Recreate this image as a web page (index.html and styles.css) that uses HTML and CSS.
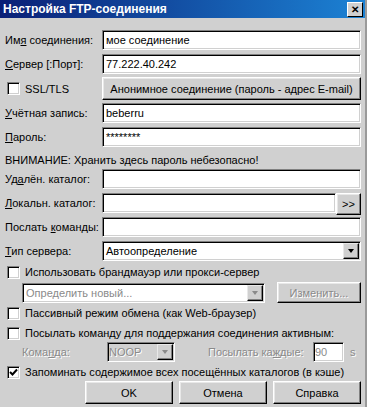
FILE: index.html
```html
<!DOCTYPE html>
<html lang="ru">
<head>
  <meta charset="UTF-8">
  <title>Настройка FTP-соединения</title>
  <link rel="stylesheet" href="styles.css">
</head>
<body>
  <div class="dialog">
    <div class="titlebar">
      <span class="title">Настройка FTP-соединения</span>
      <span class="close">✕</span>
    </div>

    <div class="content">
      <div class="field">
        <label>Им<u>я</u> соединения:</label>
        <div class="edit">мое соединение</div>
      </div>
      <div class="field gap-4">
        <label><u>С</u>ервер [:Порт]:</label>
        <div class="edit">77.222.40.242</div>
      </div>
      <div class="field tall gap-3">
        <div class="check-line"><span class="box"></span>SSL/TLS</div>
        <div class="button">Анонимное соединение (пароль - адрес E-mail)</div>
      </div>
      <div class="field gap-3">
        <label><u>У</u>чётная запись:</label>
        <div class="edit">beberru</div>
      </div>
      <div class="field gap-4">
        <label><u>П</u>ароль:</label>
        <div class="edit">********</div>
      </div>
      <div class="warning">ВНИМАНИЕ: Хранить здесь пароль небезопасно!</div>
      <div class="field">
        <label>Уд<u>а</u>лён. каталог:</label>
        <div class="edit"></div>
      </div>
      <div class="field gap-4">
        <label><u>Л</u>окальн. каталог:</label>
        <div class="browse">
          <div class="edit"></div>
          <div class="button small">&gt;&gt;</div>
        </div>
      </div>
      <div class="field gap-4">
        <label>Послать <u>к</u>оманды:</label>
        <div class="edit"></div>
      </div>
      <div class="field gap-4">
        <label><u>Т</u>ип сервера:</label>
        <div class="edit combo">Автоопределение<span class="arrow"></span></div>
      </div>

      <div class="check-line row first"><span class="box"></span>Использовать брандмауэр или прокси-сервер</div>
      <div class="proxy">
        <div class="edit combo off">Определить новый...<span class="arrow"></span></div>
        <div class="button disabled">Изменить...</div>
      </div>
      <div class="check-line row passive"><span class="box"></span>Пассивный режим обмена (как Web-браузер)</div>
      <div class="check-line row"><span class="box"></span>Посылать команду для поддержания соединения активным:</div>
      <div class="keepalive">
        <span class="muted label-cmd">Кома<u>н</u>да:</span>
        <div class="edit combo grey">NOOP<span class="arrow"></span></div>
        <span class="muted label-every">Посылать ка<u>ж</u>дые:</span>
        <div class="edit seconds">90</div>
        <span class="muted">s</span>
      </div>
      <div class="check-line row cache">
        <span class="box">
          <svg width="9" height="9" viewBox="0 0 9 9"><path d="M1 4 L3.5 6.5 L8 1.5" fill="none" stroke="#000" stroke-width="2"/></svg>
        </span>Запоминать содержимое всех посещённых каталогов (в кэше)
      </div>

      <div class="actions">
        <div class="button">OK</div>
        <div class="button">Отмена</div>
        <div class="button">Справка</div>
      </div>
    </div>
  </div>
</body>
</html>
```

FILE: styles.css
```css
body {
  margin: 0;
  font-family: 'Liberation Sans', Arial, sans-serif;
  font-size: 11px;
  color: #000;
  background-color: #cfcfcf;
}
.dialog {
  width: 367px;
  height: 407px;
  background-color: #d0d0d0;
  border-right: 2px solid #9a9a9a;
  box-sizing: border-box;
  overflow: hidden;
}
.titlebar {
  height: 18px;
  display: flex;
  align-items: center;
  justify-content: space-between;
  padding: 0 2px 0 3px;
  background: linear-gradient(to right, #0a1f76, #1c82d4);
}
.title {
  color: white;
  font-weight: bold;
  font-size: 12px;
}
.close {
  width: 14px;
  height: 13px;
  line-height: 13px;
  text-align: center;
  font-size: 10px;
  font-weight: bold;
  background-color: #d0d0d0;
  border: 1px solid;
  border-color: #fff #000 #000 #fff;
}
.content {
  padding: 12px 4px 0 5px;
}
.field {
  display: grid;
  grid-template-columns: 97px 1fr;
  align-items: center;
  height: 20px;
}
.field.tall {
  height: 23px;
}
.gap-3 {
  margin-top: 3px;
}
.gap-4 {
  margin-top: 4px;
}
label {
  white-space: nowrap;
}
.edit {
  position: relative;
  height: 20px;
  box-sizing: border-box;
  background-color: white;
  border: 1px solid;
  border-color: #808080 #fff #fff #808080;
  box-shadow: inset 1px 1px 0 #000, inset -1px -1px 0 #d0d0d0;
  padding: 0 3px;
  line-height: 18px;
  white-space: nowrap;
  overflow: hidden;
}
.button {
  height: 23px;
  box-sizing: border-box;
  display: flex;
  align-items: center;
  justify-content: center;
  background-color: #d0d0d0;
  border: 1px solid;
  border-color: #fff #000 #000 #fff;
  box-shadow: inset -1px -1px 0 #808080, inset 1px 1px 0 #e8e8e8;
  white-space: nowrap;
}
.button.small {
  width: 25px;
  height: 22px;
}
.button.disabled, .muted, .edit.off {
  color: #8a8a8a;
  text-shadow: 1px 1px 0 #fff;
}
.browse {
  display: flex;
  align-items: flex-start;
  height: 20px;
}
.browse .edit {
  flex: 1;
}
.warning {
  padding-top: 4px;
  line-height: 18px;
}
.check-line {
  display: flex;
  align-items: center;
  gap: 5px;
  white-space: nowrap;
}
.check-line.row {
  height: 16px;
  margin-top: 4px;
  padding-left: 2px;
}
.check-line.first {
  margin-top: 3px;
}
.check-line.passive, .check-line.cache {
  margin-top: 2px;
}
.field .check-line {
  padding-left: 2px;
}
.box {
  width: 13px;
  height: 13px;
  box-sizing: border-box;
  display: flex;
  align-items: center;
  justify-content: center;
  background-color: white;
  border: 1px solid;
  border-color: #808080 #fff #fff #808080;
  box-shadow: inset 1px 1px 0 #000, inset -1px -1px 0 #d0d0d0;
}
.combo {
  padding-right: 20px;
}
.combo.grey {
  background-color: #d0d0d0;
  color: #8a8a8a;
  text-shadow: 1px 1px 0 #fff;
}
.arrow {
  position: absolute;
  top: 1px;
  right: 1px;
  width: 16px;
  height: 16px;
  box-sizing: border-box;
  background-color: #d0d0d0;
  border: 1px solid;
  border-color: #e8e8e8 #000 #000 #e8e8e8;
  box-shadow: inset -1px -1px 0 #808080;
}
.arrow::after {
  content: "";
  position: absolute;
  left: 4px;
  top: 5px;
  border-left: 3px solid transparent;
  border-right: 3px solid transparent;
  border-top: 4px solid #000;
}
.off .arrow::after, .grey .arrow::after {
  border-top-color: #8a8a8a;
}
.proxy {
  display: flex;
  align-items: center;
  gap: 12px;
  height: 21px;
  margin-top: 2px;
  padding-left: 17px;
}
.proxy .edit {
  width: 243px;
}
.proxy .button {
  flex: 1;
  height: 21px;
}
.keepalive {
  display: flex;
  align-items: center;
  height: 20px;
  margin-top: 1px;
  padding-left: 17px;
  white-space: nowrap;
}
.label-cmd {
  width: 85px;
}
.keepalive .combo {
  width: 68px;
  padding-left: 1px;
}
.label-every {
  margin-left: 33px;
  width: 105px;
}
.seconds {
  width: 31px;
  margin-right: 6px;
  color: #8a8a8a;
  padding-left: 1px;
}
.actions {
  display: flex;
  justify-content: flex-end;
  gap: 6px;
  margin-top: 1px;
}
.actions .button {
  width: 88px;
}
```
